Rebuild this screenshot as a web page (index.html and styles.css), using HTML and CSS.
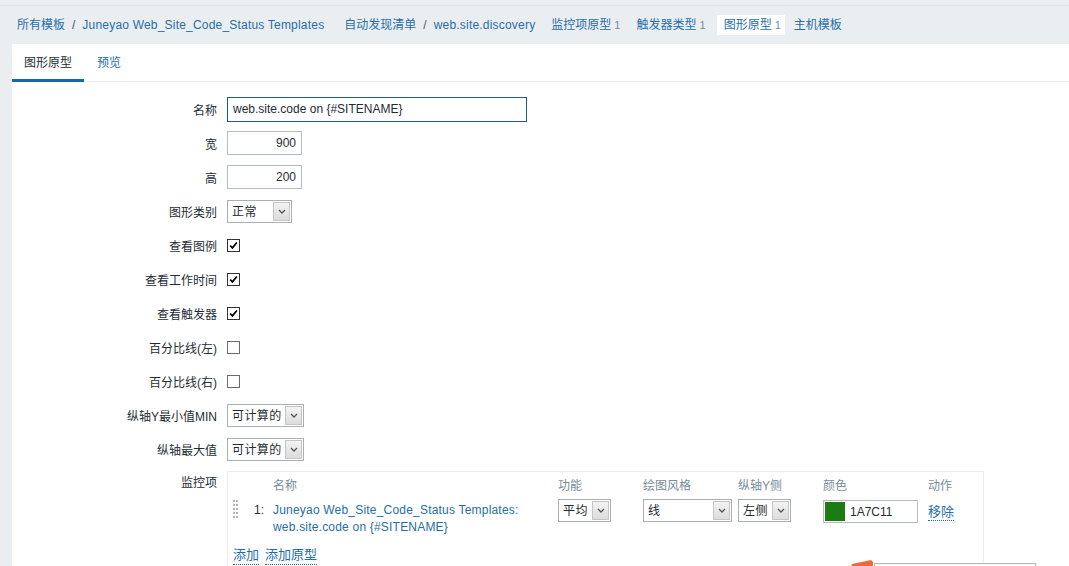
FILE: index.html
```html
<!DOCTYPE html>
<html lang="zh">
<head>
<meta charset="utf-8">
<title>图形原型</title>
<link rel="stylesheet" href="styles.css">
</head>
<body>
<div class="topstrip"></div>
<nav class="crumbs">
  <a class="crumb">所有模板</a><span class="sep">/</span><a class="crumb lat">Juneyao Web_Site_Code_Status Templates</a>
  <a class="crumb group">自动发现清单</a><span class="sep">/</span><a class="crumb lat">web.site.discovery</a>
  <a class="crumb">监控项原型<span class="count">1</span></a>
  <a class="crumb">触发器类型<span class="count">1</span></a>
  <span class="crumb selected">图形原型<span class="count">1</span></span>
  <a class="crumb">主机模板</a>
</nav>

<main class="panel">
  <ul class="tabs">
    <li class="tab active">图形原型</li>
    <li class="tab link">预览</li>
  </ul>

  <form class="form">
    <div class="row"><label class="lbl">名称</label><input class="txt name focus" value="web.site.code on {#SITENAME}"></div>
    <div class="row"><label class="lbl">宽</label><input class="txt num" value="900"></div>
    <div class="row"><label class="lbl">高</label><input class="txt num" value="200"></div>
    <div class="row"><label class="lbl">图形类别</label><div class="sel w65"><span class="val">正常</span><span class="arrow"><svg viewBox="0 0 8 5" width="8" height="5"><polyline points="1,1 4,4 7,1" fill="none" stroke="#555" stroke-width="1.3"/></svg></span></div></div>
    <div class="row"><label class="lbl">查看图例</label><span class="cb checked"><svg viewBox="0 0 13 13" width="11" height="11"><path d="M2.5 6.5 L5.2 9.3 L10.5 3" fill="none" stroke="#000" stroke-width="2"/></svg></span></div>
    <div class="row"><label class="lbl">查看工作时间</label><span class="cb checked"><svg viewBox="0 0 13 13" width="11" height="11"><path d="M2.5 6.5 L5.2 9.3 L10.5 3" fill="none" stroke="#000" stroke-width="2"/></svg></span></div>
    <div class="row"><label class="lbl">查看触发器</label><span class="cb checked"><svg viewBox="0 0 13 13" width="11" height="11"><path d="M2.5 6.5 L5.2 9.3 L10.5 3" fill="none" stroke="#000" stroke-width="2"/></svg></span></div>
    <div class="row"><label class="lbl">百分比线(左)</label><span class="cb"></span></div>
    <div class="row"><label class="lbl">百分比线(右)</label><span class="cb"></span></div>
    <div class="row"><label class="lbl">纵轴Y最小值MIN</label><div class="sel w77"><span class="val">可计算的</span><span class="arrow"><svg viewBox="0 0 8 5" width="8" height="5"><polyline points="1,1 4,4 7,1" fill="none" stroke="#555" stroke-width="1.3"/></svg></span></div></div>
    <div class="row"><label class="lbl">纵轴最大值</label><div class="sel w77"><span class="val">可计算的</span><span class="arrow"><svg viewBox="0 0 8 5" width="8" height="5"><polyline points="1,1 4,4 7,1" fill="none" stroke="#555" stroke-width="1.3"/></svg></span></div></div>
    <div class="row items-row">
      <label class="lbl">监控项</label>
      <div class="items">
        <div class="grid head">
          <span></span><span></span>
          <span>名称</span><span>功能</span><span>绘图风格</span><span>纵轴Y侧</span><span>颜色</span><span>动作</span>
        </div>
        <div class="grid item">
          <span class="handle"></span>
          <span class="idx">1:</span>
          <a class="itemname">Juneyao Web_Site_Code_Status Templates:<br>web.site.code on {#SITENAME}</a>
          <div class="sel w53"><span class="val">平均</span><span class="arrow"><svg viewBox="0 0 8 5" width="8" height="5"><polyline points="1,1 4,4 7,1" fill="none" stroke="#555" stroke-width="1.3"/></svg></span></div>
          <div class="sel w89"><span class="val">线</span><span class="arrow"><svg viewBox="0 0 8 5" width="8" height="5"><polyline points="1,1 4,4 7,1" fill="none" stroke="#555" stroke-width="1.3"/></svg></span></div>
          <div class="sel w53"><span class="val">左侧</span><span class="arrow"><svg viewBox="0 0 8 5" width="8" height="5"><polyline points="1,1 4,4 7,1" fill="none" stroke="#555" stroke-width="1.3"/></svg></span></div>
          <div class="color"><span class="swatch"></span><span class="hex">1A7C11</span></div>
          <span class="act"><a class="dlink">移除</a></span>
        </div>
        <div class="adds"><a class="dlink">添加</a><a class="dlink">添加原型</a></div>
      </div>
    </div>
  </form>
</main>

<div class="overlay">
  <svg class="pointer" viewBox="0 0 23 8" width="23" height="8"><polygon points="1,5 20,1 22,3 22,8 0,8" fill="#ee6a35"/></svg>
  <div class="popbox"></div>
</div>
</body>
</html>
```

FILE: styles.css
```css
* { box-sizing: border-box; }

body {
  margin: 0;
  background: #ebeef0;
  font-family: "Liberation Sans", Arial, "Noto Sans CJK SC", sans-serif;
  font-size: 12px;
  color: #1f2c33;
  overflow: hidden;
  height: 566px;
}

a { color: #1f6eab; text-decoration: none; }

.topstrip {
  height: 6px;
  border-bottom: 1px solid #e1e5e8;
}

.crumbs {
  display: flex;
  align-items: center;
  gap: 2px;
  height: 38px;
  padding: 9px 10px;
}
.crumb {
  padding: 0 7px;
  line-height: 20px;
  height: 20px;
  color: #1f6eab;
  white-space: nowrap;
}
.crumb.lat { letter-spacing: 0.2px; }
.crumb.group { margin-left: 4px; }
.crumb.selected { background: #fff; color: #1f6eab; margin-left: 2px; padding-right: 4px; }
.sep { color: #4a5860; margin: 0 -2px; }
.count { color: #768d99; font-size: 11px; margin-left: 3px; }

.panel {
  margin-left: 12px;
  background: #fff;
  height: 522px;
  overflow: hidden;
}

.tabs {
  display: flex;
  list-style: none;
  margin: 0;
  padding: 0;
  height: 38px;
  border-bottom: 1px solid #ebeef0;
}
.tab {
  padding: 3px 12px 0;
  line-height: 33px;
  height: 38px;
  border-bottom: 3px solid transparent;
  color: #1f2c33;
}
.tab.active { border-bottom-color: #0e6aa8; }
.tab.link { color: #1f6eab; padding-left: 13px; }

.form { padding-top: 15px; margin: 0; }

.row {
  display: flex;
  align-items: center;
  height: 24px;
  margin-bottom: 10px;
}
.lbl {
  width: 205px;
  margin-right: 10px;
  text-align: right;
  white-space: nowrap;
}

.txt {
  height: 24px;
  border: 1px solid #b7bcc0;
  font: inherit;
  color: #1f2c33;
  padding: 0 5px;
  margin: 0;
  outline: none;
}
.txt.name { width: 300px; height: 25px; border-color: #1d5c86; }
.txt.num { width: 75px; text-align: right; }

.sel {
  display: flex;
  align-items: stretch;
  height: 23px;
  border: 1px solid #a9b0b5;
  background: #fff;
}
.sel .val { flex: 1; padding-left: 4px; line-height: 22px; font-size: 12px; white-space: nowrap; overflow: hidden; letter-spacing: 0.4px; }
.sel .arrow {
  flex: none;
  width: 17px;
  margin: 1px;
  background: linear-gradient(#f3f3f3, #dcdcdc);
  border: 1px solid #c5c5c5;
  display: flex;
  align-items: center;
  justify-content: center;
}
.w65 { width: 65px; }
.w77 { width: 77px; }
.w53 { width: 53px; }
.w89 { width: 89px; }

.cb {
  width: 13px;
  height: 13px;
  border: 1px solid #6b6b6b;
  background: #fff;
  display: flex;
  align-items: center;
  justify-content: center;
}
.cb.checked { border-color: #333; }

.items-row { align-items: flex-start; height: auto; }
.items-row .lbl { line-height: 24px; }

.items {
  width: 757px;
  height: 120px;
  border: 1px solid #ebeef0;
  border-bottom: none;
}
.grid {
  display: grid;
  grid-template-columns: 26px 19px 285px 85px 95px 85px 105px 1fr;
}
.head {
  height: 27px;
  padding-top: 7px;
  line-height: 14px;
  color: #768d99;
}
.item { align-items: start; }
.handle {
  margin: 1px 0 0 5px;
  width: 5px;
  height: 18px;
  border-left: 2px dotted #b4b4b4;
  border-right: 2px dotted #b4b4b4;
}
.idx { line-height: 17px; padding-top: 3px; }
.itemname { line-height: 17px; padding-top: 3px; letter-spacing: 0.2px; }

.color {
  width: 95px;
  height: 23px;
  border: 1px solid #b7bcc0;
  display: flex;
  align-items: center;
  padding-left: 1px;
  margin-top: 1px;
}
.swatch { width: 20px; height: 19px; background: #1a7c11; }
.hex { margin-left: 5px; font-size: 12px; }

.act { padding-top: 2px; }
.dlink {
  color: #1f6eab;
  border-bottom: 1px dotted #1f6eab;
  padding-bottom: 1px;
  font-size: 13px;
}

.adds {
  display: flex;
  gap: 6px;
  padding: 11px 0 0 5px;
  line-height: 16px;
}

.overlay {
  position: absolute;
  left: 851px;
  top: 559px;
  width: 186px;
  height: 12px;
}
.pointer { position: absolute; left: 0; top: 0; }
.popbox {
  position: absolute;
  left: 23px;
  top: 4px;
  width: 162px;
  height: 20px;
  background: #fff;
  border: 1px solid #aeb6bd;
}
```
